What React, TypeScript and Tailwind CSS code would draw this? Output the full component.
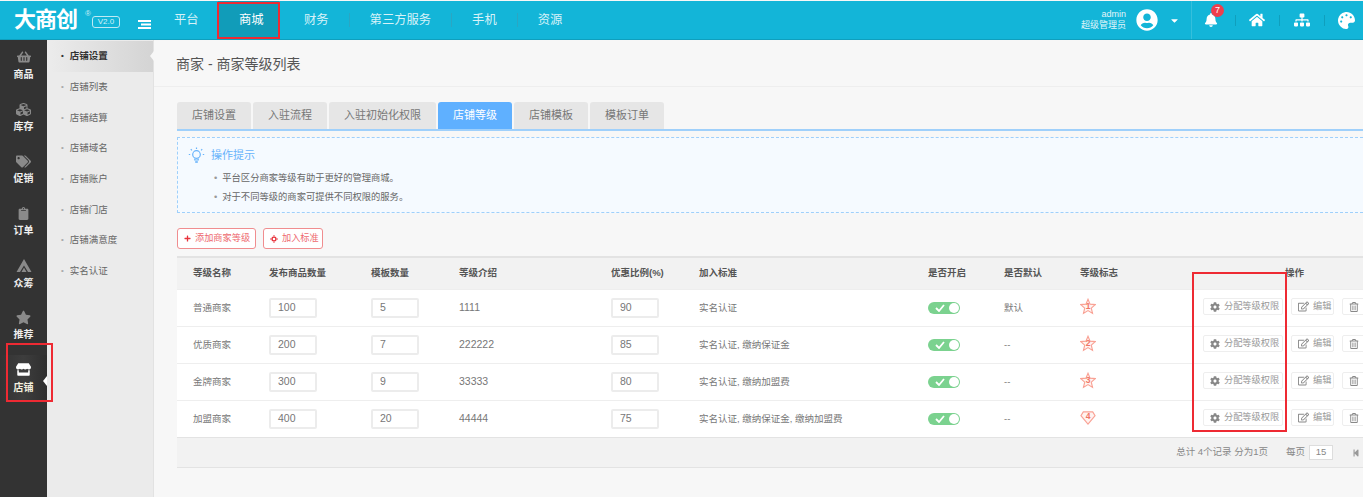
import React from "react";
import {
  FaBell,
  FaCaretDown,
  FaClipboard,
  FaCog,
  FaCubes,
  FaHome,
  FaPalette,
  FaPlus,
  FaRegEdit,
  FaRegTrashAlt,
  FaShoppingBasket,
  FaSitemap,
  FaStar,
  FaStepBackward,
  FaStore,
  FaTags,
  FaUserCircle,
} from "react-icons/fa";

const FONT = "font-['Liberation_Sans','Noto_Sans_CJK_SC',sans-serif]";

const subItems = ["店铺设置", "店铺列表", "店铺结算", "店铺域名", "店铺账户", "店铺门店", "店铺满意度", "实名认证"];
const tabs = ["店铺设置", "入驻流程", "入驻初始化权限", "店铺等级", "店铺模板", "模板订单"];

const rows = [
  { name: "普通商家", goods: "100", tpl: "5", intro: "1111", rate: "90", std: "实名认证", def: "默认", level: 1 },
  { name: "优质商家", goods: "200", tpl: "7", intro: "222222", rate: "85", std: "实名认证, 缴纳保证金", def: "--", level: 2 },
  { name: "金牌商家", goods: "300", tpl: "9", intro: "33333", rate: "80", std: "实名认证, 缴纳加盟费", def: "--", level: 3 },
  { name: "加盟商家", goods: "400", tpl: "20", intro: "44444", rate: "75", std: "实名认证, 缴纳保证金, 缴纳加盟费", def: "--", level: 4 },
];

const COLS = "grid grid-cols-[76px_102px_88px_152px_88px_229px_76px_76px_123px_1fr]";

const CrowdIcon = () => (
  <svg width="16" height="14" viewBox="0 0 16 14" fill="#8a8a8a">
    <path d="M8 0 L15.5 13 H12 L8 6.5 L4 13 H0.5 Z" />
    <path d="M8 8.5 L10.5 13 H5.5 Z" />
  </svg>
);

const BulbIcon = () => (
  <svg width="17" height="17" viewBox="0 0 17 17" fill="none" stroke="#68b3fb" strokeWidth="1.2">
    <circle cx="8.5" cy="7.5" r="3.8" />
    <path d="M6.8 11.5 V13 H10.2 V11.5" />
    <path d="M7.2 15 H9.8" strokeWidth="1.6" />
    <path d="M8.5 0.5 V2 M2.8 2.2 L3.9 3.3 M14.2 2.2 L13.1 3.3 M0.8 7.5 H2.2 M14.8 7.5 H16.2" />
  </svg>
);

const railItems: { label: string; icon: React.ReactNode; h: string }[] = [
  { label: "商品", icon: <FaShoppingBasket size={14} />, h: "h-[52px]" },
  { label: "库存", icon: <FaCubes size={15} />, h: "h-[52px]" },
  { label: "促销", icon: <FaTags size={15} />, h: "h-[52px]" },
  { label: "订单", icon: <FaClipboard size={13} />, h: "h-[53px]" },
  { label: "众筹", icon: <CrowdIcon />, h: "h-[51px]" },
  { label: "推荐", icon: <FaStar size={15} />, h: "h-[46px]" },
];

const LevelMark = ({ level }: { level: number }) => (
  <svg width="16" height="17" viewBox="0 0 17 17" className="mb-[4px]">
    {level === 4 ? (
      <path d="M3.5 2.5 H13.5 L16 6.5 L8.5 15.5 L1 6.5 Z" fill="#fff3f0" stroke="#f9a295" strokeWidth="1.2" />
    ) : (
      <path
        d="M8.5 0.8 L10.7 6 L16.2 6.5 L12 10.2 L13.3 15.8 L8.5 12.8 L3.7 15.8 L5 10.2 L0.8 6.5 L6.3 6 Z"
        fill="#fff3f0"
        stroke="#f9a295"
        strokeWidth="1.2"
      />
    )}
    <text x="8.5" y={level === 4 ? 10 : 11.5} textAnchor="middle" fontSize="9" fontWeight="700" fill="#ef7565">
      {level}
    </text>
  </svg>
);

const Toggle = () => (
  <div className="flex h-[12px] w-[32px] items-center justify-between rounded-full bg-[#7bd28f] pl-[7px] pr-[1px]">
    <svg width="10" height="8" viewBox="0 0 10 8" fill="none" stroke="#fff" strokeWidth="1.8">
      <path d="M1 4 L4 7 L9 1" />
    </svg>
    <span className="h-[10px] w-[10px] rounded-full bg-white" />
  </div>
);

const NumBox = ({ value }: { value: string }) => (
  <div className="flex h-[20px] w-[48px] items-center rounded-[2px] border-2 border-[#ececec] bg-white pl-[7px] text-[10.5px] text-[#777]">
    {value}
  </div>
);

const ActionBtn = ({ icon, label, w }: { icon: React.ReactNode; label: string; w: string }) => (
  <div className={`flex h-[17px] shrink-0 items-center gap-[4px] rounded-[2px] border border-[#eeeeee] bg-white pl-[6px] text-[9.2px] text-[#999] ${w}`}>
    <span className="text-[#888]">{icon}</span>
    <span className="whitespace-nowrap">{label}</span>
  </div>
);

const NavSep = () => <span className="mx-[20px] h-[14px] w-px bg-[#2aa6c3]" />;

export default function App() {
  return (
    <div className={`${FONT} flex h-[497px] w-[1363px] flex-col overflow-hidden bg-[#f7f7f7] text-[12px]`}>
      {/* top bar */}
      <header className="relative mt-[1px] flex h-[39px] shrink-0 items-center border-b border-[#0f9fbd] bg-[#13b5d8] text-white">
        <div className="flex w-[138px] items-center pl-[14px]">
          <span className="text-[22px] font-bold leading-none tracking-[-1px]">大商创</span>
          <span className="mb-[12px] ml-[8px] text-[8px] text-[#cdeef6]">®</span>
          <span className="ml-[1px] mt-[4px] flex h-[12px] w-[28px] items-center justify-center rounded-[3px] border border-[#bfeaf4] text-[8px] text-[#d5f2f8]">
            V2.0
          </span>
        </div>
        <svg width="13" height="9" viewBox="0 0 13 9" className="mt-[9px]" fill="#fff">
          <rect x="0" y="0" width="13" height="2" />
          <rect x="3" y="3.5" width="10" height="2" />
          <rect x="0" y="7" width="13" height="2" />
        </svg>
        <nav className="ml-[23px] flex h-full items-center whitespace-nowrap text-[12.3px] text-[#d7f2f8]">
          <span className="mr-[19.4px]">平台</span>
          <div className="mr-[25px] flex h-full w-[61px] items-center bg-[#119cb9] pl-[21px] text-white">商城</div>
          <span>财务</span>
          <NavSep />
          <span>第三方服务</span>
          <NavSep />
          <span>手机</span>
          <NavSep />
          <span>资源</span>
        </nav>
        <div className="ml-auto flex h-full items-center">
          <div className="mr-[10px] text-right text-[9px] leading-[11px] text-[#e2f6fa]">
            <div>admin</div>
            <div>超级管理员</div>
          </div>
          <FaUserCircle size={22} />
          <FaCaretDown size={11} className="ml-[11px] mr-[11px]" />
          <div className="flex h-full items-center border-l border-[#35bfdc] pl-[12px]">
            <div className="relative">
              <FaBell size={14} />
              <span className="absolute left-[7px] top-[-9px] flex h-[13px] w-[13px] items-center justify-center rounded-full bg-[#ee3f4d] text-[9px]">
                7
              </span>
            </div>
            <span className="ml-[17px] h-[11px] w-px bg-[#0f9fbd]" />
            <FaHome size={16} className="ml-[13px]" />
            <span className="ml-[14px] h-[11px] w-px bg-[#0f9fbd]" />
            <FaSitemap size={16} className="ml-[14px]" />
            <span className="ml-[14px] h-[11px] w-px bg-[#0f9fbd]" />
            <FaPalette size={17} className="ml-[13px] mr-[8px]" />
          </div>
        </div>
        {/* annotation */}
        <div className="absolute left-[217px] top-[1px] h-[37px] w-[63px] border-2 border-[#ee2a33]" />
      </header>

      <div className="flex min-h-0 flex-1">
        {/* icon rail */}
        <aside className="relative flex w-[47px] shrink-0 flex-col bg-[#333333] pt-[9px] text-[10px] font-bold text-[#eeeeee]">
          {railItems.map((r) => (
            <div key={r.label} className={`flex flex-col items-center gap-[3px] ${r.h}`}>
              <span className="flex h-[16px] items-center text-[#8a8a8a]">{r.icon}</span>
              <span className="leading-[14px]">{r.label}</span>
            </div>
          ))}
          <div className="flex flex-col items-center gap-[4px] bg-gradient-to-r from-[#333333] via-[#3d3d3d] to-[#2f2f2f] pb-[6px] pt-[7px] text-[#f3efdf]">
            <FaStore size={15} className="text-white" />
            <span className="leading-[14px]">店铺</span>
          </div>
          <span className="absolute left-[43px] top-[336px] h-0 w-0 border-y-[5px] border-r-[4px] border-y-transparent border-r-white" />
          <div className="absolute left-[6px] top-[303px] h-[59px] w-[47px] border-2 border-[#ee2a33]" />
        </aside>

        {/* sub menu */}
        <aside className="w-[107px] shrink-0 border-r border-[#e2e2e2] bg-[#ebebeb] pt-px text-[9.5px] text-[#666]">
          {subItems.map((item, i) => (
            <div
              key={item}
              className={`relative flex h-[30.7px] items-center pl-[14px] ${i === 0 ? "bg-gradient-to-r from-[#ececec] to-[#d4d4d4] font-bold text-[#333]" : ""}`}
            >
              <span className={`mr-[6px] text-[8px] ${i === 0 ? "text-[#333]" : "text-[#aaa]"}`}>•</span>
              {item}
              {i === 0 && (
                <span className="absolute right-[-1px] top-[10px] h-0 w-0 border-y-[5px] border-r-[4px] border-y-transparent border-r-[#f7f7f7]" />
              )}
            </div>
          ))}
        </aside>

        {/* main */}
        <main className="min-w-0 flex-1 pl-[23px]">
          <div className="ml-[-23px] flex h-[47px] items-center border-b border-[#eeeeee] pl-[22px] pt-[2px] text-[14px] text-[#555]">
            商家 - 商家等级列表
          </div>

          <div className="mt-[15px] flex gap-[2px] border-b-2 border-[#9fd0fb] text-[11px] text-[#777]">
            {tabs.map((tab) => (
              <div
                key={tab}
                className={`flex h-[27px] items-center rounded-t-[3px] px-[15px] ${tab === "店铺等级" ? "bg-[#5fb0ff] text-white" : "bg-[#e6e6e6]"}`}
              >
                {tab}
              </div>
            ))}
          </div>

          <div className="mt-[6px] h-[76px] border border-r-0 border-dashed border-[#9fd0fb] bg-[#f5faff] text-[9.3px] text-[#666]">
            <div className="flex items-center pl-[10px] pt-[9px] text-[11px] text-[#68b3fb]">
              <BulbIcon />
              <span className="ml-[6px]">操作提示</span>
            </div>
            <div className="mt-[5px] pl-[36px] leading-[19px]">
              <div><span className="mr-[5px] text-[#999]">•</span>平台区分商家等级有助于更好的管理商城。</div>
              <div><span className="mr-[5px] text-[#999]">•</span>对于不同等级的商家可提供不同权限的服务。</div>
            </div>
          </div>

          <div className="mt-[15px] flex gap-[7px] text-[9.2px] text-[#ee6a6f]">
            <div className="flex h-[21px] w-[79px] items-center gap-[4px] rounded-[3px] border border-[#f08d8f] bg-white pl-[6px]">
              <FaPlus size={7} className="text-[#e8333c]" />
              添加商家等级
            </div>
            <div className="flex h-[21px] w-[60px] items-center gap-[4px] rounded-[3px] border border-[#f08d8f] bg-white pl-[6px]">
              <svg width="8" height="8" viewBox="0 0 8 8" fill="#e8333c">
                <path d="M4 0 L5.4 1.6 H2.6 Z M4 8 L2.6 6.4 H5.4 Z M0 4 L1.6 2.6 V5.4 Z M8 4 L6.4 5.4 V2.6 Z" />
                <rect x="2.4" y="2.4" width="3.2" height="3.2" fill="none" stroke="#e8333c" strokeWidth="1" />
              </svg>
              加入标准
            </div>
          </div>

          {/* table */}
          <div className="relative mt-[7px] border-t-2 border-[#e3e3e3]">
            <div className={`${COLS} h-[31px] items-center bg-[#f2f2f2] pl-[16px] text-[9.5px] font-bold text-[#555]`}>
              <span>等级名称</span>
              <span>发布商品数量</span>
              <span>模板数量</span>
              <span>等级介绍</span>
              <span>优惠比例(%)</span>
              <span>加入标准</span>
              <span>是否开启</span>
              <span>是否默认</span>
              <span>等级标志</span>
              <span className="pl-[82px]">操作</span>
            </div>
            {rows.map((r) => (
              <div key={r.name} className={`${COLS} h-[37px] items-center border-t border-[#eeeeee] bg-white pl-[16px] text-[9.5px] text-[#777]`}>
                <span>{r.name}</span>
                <NumBox value={r.goods} />
                <NumBox value={r.tpl} />
                <span className="text-[10.5px]">{r.intro}</span>
                <NumBox value={r.rate} />
                <span>{r.std}</span>
                <Toggle />
                <span>{r.def}</span>
                <LevelMark level={r.level} />
                <div className="mb-[3px] flex gap-[8px] overflow-hidden">
                  <ActionBtn icon={<FaCog size={10} />} label="分配等级权限" w="w-[80px]" />
                  <ActionBtn icon={<FaRegEdit size={11} />} label="编辑" w="w-[43px]" />
                  <ActionBtn icon={<FaRegTrashAlt size={10} />} label="删除" w="w-[43px]" />
                </div>
              </div>
            ))}
            <div className="flex h-[31px] items-center justify-end border-y border-[#e3e3e3] bg-[#f2f2f2] text-[9.5px] text-[#888]">
              <span className="whitespace-nowrap">总计 4个记录 分为1页</span>
              <span className="ml-[18px]">每页</span>
              <span className="ml-[4px] flex h-[15px] w-[24px] items-center justify-center border border-[#dddddd] bg-white">15</span>
              <FaStepBackward size={8} className="ml-[19px] mr-[3px] text-[#999]" />
            </div>
            <div className="absolute left-[1015px] top-[14px] h-[160px] w-[95px] border-2 border-[#ee2a33]" />
          </div>
        </main>
      </div>
    </div>
  );
}
